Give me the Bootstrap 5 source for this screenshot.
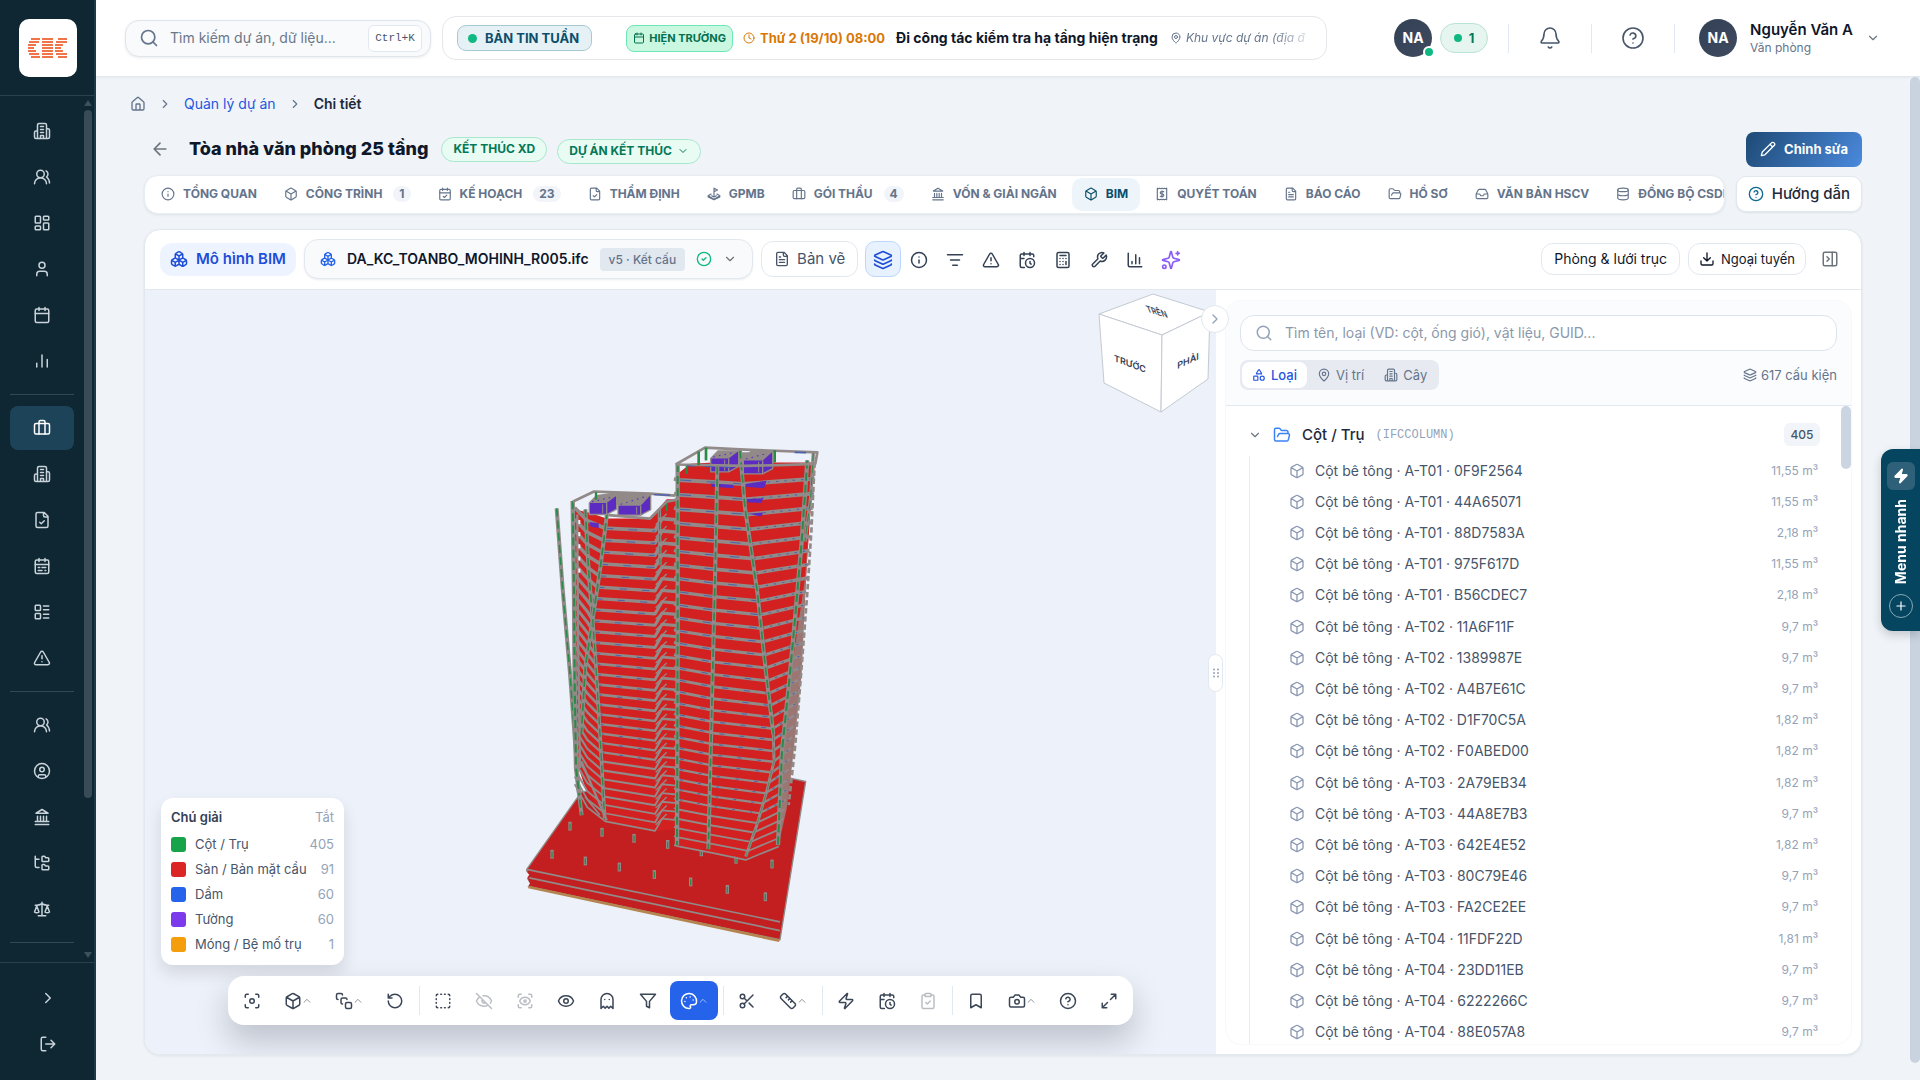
<!DOCTYPE html>
<html lang="vi">
<head>
<meta charset="utf-8">
<meta name="viewport" content="width=device-width, initial-scale=1">
<title>Tòa nhà văn phòng 25 tầng</title>
<link rel="stylesheet" href="https://cdn.jsdelivr.net/npm/bootstrap@5.3.0/dist/css/bootstrap.min.css">
<style>
:root{--ink:#0f172a;--slate:#475569;--muted:#64748b;--soft:#94a3b8;--line:#e2e8f0;--teal:#0b4f6c;--blue:#1d4ed8}
body{font-family:Inter,"Noto Sans",sans-serif;font-size:15px;line-height:20px;color:var(--ink);background:#f0f4f8}
a{text-decoration:none}
button{font:inherit;color:inherit;background:none;border:0;padding:0}
.ico{width:18px;height:18px;flex:none;fill:none;stroke:currentColor;stroke-width:2;stroke-linecap:round;stroke-linejoin:round}
.i10{width:10px;height:10px}.i12{width:12px;height:12px}.i14{width:14px;height:14px}.i16{width:16px;height:16px}.i20{width:20px;height:20px}.i24{width:24px;height:24px}
/* sidebar */
.side{width:96px;flex:none;background:#0f2733;border-right:2px solid #1d3a48;color:#c9d3da}
.side-logo{height:96px;border-bottom:1px solid #2b424e;padding:19px}
.side-logo a{width:58px;height:58px;border-radius:10px;background:#fff}
.side-list{padding:13px 0 0 10px;width:74px}
.side-list a{height:44px;margin-bottom:2px;border-radius:8px;color:#c9d3da}
.side-list a.on{background:#1c4358;color:#fff}
.side-list hr{margin:9px 0 11px;border:0;border-top:1px solid #2f4855;opacity:1}
.side-track{width:8px;margin:0 2px 0 auto;color:#3b515c}
.side-track i{flex:0 0 688px;background:#374c57;border-radius:4px}
.side-foot{height:118px;border-top:1px solid #2b424e;padding:12px 0 0 2px}
.side-foot button{height:44px;margin-bottom:2px}
/* top bar */
.top{height:77px;background:#fff;border-bottom:1px solid #e2e8f0;box-shadow:0 1px 2px #0f172a0a;padding:0 40px 0 29px}
.find{width:306px;height:37px;background:#f8fafc;border:1px solid #dfe5ec;border-radius:14px;box-shadow:0 1px 3px #0f172a14;color:var(--muted);padding:0 8px 0 13px;gap:9px;font-size:14px}
.find input,.tree-find input{border:0;outline:0;background:none;min-width:0;flex:1;color:var(--slate)}
.find input::placeholder{color:#6b7789}
.keys{font:11px "Liberation Mono",monospace;height:27px;width:54px;background:#fff;border:1px solid #e2e8f0;border-radius:6px;color:var(--slate)}
.news{height:44px;border:1px solid #e5e7eb;border-radius:14px;margin-left:11px;padding:0 10px 0 14px;flex:1;min-width:0;overflow:hidden;white-space:nowrap}
.news-tag{height:26px;border:1px solid #a9c8d6;border-radius:9px;background:#e6f1f6;color:var(--teal);font-size:13px;font-weight:700;padding:0 12px 0 10px;gap:8px}
.dot{width:9px;height:9px;border-radius:50%;background:#10b981;flex:none}
.site-tag{height:27px;border:1px solid #6ee7b7;border-radius:8px;background:#c9f7e0;color:#04704f;font-size:11px;font-weight:700;padding:0 6px;gap:4px;margin-left:34px}
.when{color:#d97706;font-size:13px;font-weight:700;gap:5px;margin-left:10px}
.what{font-size:14px;font-weight:700;margin-left:11px}
.where{font-size:12px;font-style:italic;color:var(--muted);gap:4px;margin-left:12px;min-width:0;flex:1;overflow:hidden;-webkit-mask-image:linear-gradient(90deg,#000 70%,transparent);mask-image:linear-gradient(90deg,#000 70%,transparent)}
.people{margin-left:67px}
.face{width:38px;height:38px;border-radius:50%;background:linear-gradient(135deg,#334155,#3f4a5f);color:#fff;font-size:14px;font-weight:700}
.face .dot{right:-3px;bottom:-1px;border:2px solid #fff;box-sizing:content-box;width:8px;height:8px}
.online{width:48px;height:30px;border:1px solid #b9e3d2;border-radius:15px;background:#e6f5ef;color:#047857;font-size:13px;font-weight:700;gap:7px}
.online .dot{width:8px;height:8px}
.vbar{width:1px;height:29px;background:#e2e8f0}
.cell{width:82px;color:var(--slate)}
.cell .ico{stroke-width:1.6}
.who{gap:13px}
.who b{font-size:15px;font-weight:600}
.who small{font-size:12px;color:#64748b}
/* main column */
.main{padding:16px 34px 25px;min-width:0}
.column{min-width:0;min-height:0}
.gutter{width:10px;flex:none}
.gutter i{display:block;background:#c9d3e0;border-radius:5px;height:calc(100% - 17px)}
.crumb{height:22px;gap:12px;color:var(--muted);margin-bottom:17px;font-size:14px}
.crumb a{color:#2456e0}.crumb a.home{color:var(--muted)}
.crumb span{color:#1e293b;font-weight:600}
.inner{padding:0 14px}
.head-row{height:35px;margin-bottom:8px;padding-left:6px;gap:10px}
.head-row h1{font-size:18px;line-height:28px;font-weight:800;margin:0 3px 0 9px}
.state{height:25px;border:1px solid #a7e8cd;border-radius:13px;background:#e9fcf3;color:#047857;font-size:12px;font-weight:700;padding:0 11px;gap:5px}
.edit{height:35px;border-radius:8px;color:#fff;background:linear-gradient(120deg,#1e4a75,#4a89dc);font-size:13px;font-weight:700;padding:0 14px;gap:8px}
.tabs{height:39px;background:#fff;border:1px solid #e8edf2;border-radius:14px;box-shadow:0 1px 3px #0f172a14;padding:0 4px;overflow:hidden;gap:3px;flex:1;min-width:0}
.tabs a{height:33px;border-radius:10px;padding:0 12px;gap:8px;color:#64748b;font-size:12px;font-weight:700;white-space:nowrap}
.tabs a.on{background:#edf5fa;color:#0b4f6c}
.num{background:#f1f5f9;border-radius:8px;font-size:12px;line-height:16px;padding:0 6px;margin-left:3px}
.guide{height:36px;background:#fff;border:1px solid #e2e8f0;border-radius:10px;box-shadow:0 1px 2px #0f172a14;padding:0 11px;gap:8px;margin-left:11px;font-size:15px;font-weight:500;color:#1e293b}
/* workspace */
.work{background:#fff;border:1px solid #e2e8f0;border-radius:16px;box-shadow:0 1px 3px #0f172a14;margin-top:15px;overflow:hidden}
.tools{height:60px;border-bottom:1px solid #e2e8f0;padding:0 22px 0 15px}
.mode{height:33px;border-radius:12px;background:#eef4ff;color:var(--blue);font-weight:600;padding:0 10px;gap:8px}
.file{height:40px;border:1px solid #e2e8f0;border-radius:14px;background:#f8fafc;box-shadow:0 1px 2px #0f172a14;padding:0 15px;margin:0 8px;font-size:14px;font-weight:600;gap:11px}
.ver{background:#e2e8f0;border-radius:4px;color:var(--muted);font-size:12px;font-weight:500;line-height:23px;padding:0 9px}
.pill{border:1px solid #e2e8f0;border-radius:12px;background:#fff;gap:7px}
.draw{height:36px;padding:0 12px;color:var(--slate)}
.cut{height:32px;padding:0 12px;font-size:14px}
.off{height:32px;padding:0 10px;font-size:13px;gap:6px;margin:0 15px 0 8px}
.sq{width:36px;height:36px;border-radius:10px;color:#334155}
.sq.on{background:#e8f1fe;border:1px solid #bcd7fb;color:var(--blue);margin-left:7px}
.view{background:#edf1f9;min-width:0;flex:1}
.model{left:355px;top:140px;width:350px;height:530px}
.cube{right:0;top:1px;width:126px;height:126px}
.legend-box{left:16px;bottom:89px;width:183px;background:#fff;border-radius:12px;box-shadow:0 8px 16px #0f172a1f;padding:9px 10px;font-size:13px;color:var(--slate)}
.legend-box dl{margin:5px 0 0}
.legend-box dl>div{height:24px;margin-top:1px}
.legend-box dt{font-weight:400}.legend-box dd{margin:0 0 0 auto;color:var(--soft)}
.legend-box i{width:15px;height:15px;border-radius:3px;margin-right:9px}
.dock{left:83px;bottom:29px;height:49px;background:#fff;border-radius:16px;box-shadow:0 16px 32px #0f172a38;padding:0 5px;gap:3px;color:#3b4657}
.dock button{width:38px;height:39px;border-radius:8px}
.dock button.wide{width:48px}
.dock button.on{background:#2563eb;color:#fff}
.dock button:disabled{opacity:.35}
.dock .vbar{margin:0 1px 0 2px}
.dock .ico+.ico{opacity:.7}
/* element tree */
.panel{width:645px;padding:10px 9px 9px}
.fold{left:-15px;top:15px;width:28px;height:28px;border-radius:50%;background:#fff;border:1px solid #e2e8f0;color:var(--soft)}
.grip{left:-8px;top:364px;width:15px;height:38px;border-radius:8px;background:#fff;border:1px solid #e2e8f0;color:var(--soft)}
.tree-box{border-radius:16px;border:1px solid #f6f8fa;overflow:hidden}
.tree-top{height:105px;background:#fbfcfe;border-bottom:1px solid #e2e8f0;padding:14px}
.tree-find{height:36px;background:#fff;border:1px solid #dde4ec;border-radius:14px;padding:0 14px;gap:10px;color:var(--soft);font-size:14px;margin-bottom:9px}
.tree-find input::placeholder{color:#8b98ab}
.seg{height:30px;background:#e7ebf1;border-radius:8px;padding:2px;font-size:13px;color:var(--muted)}
.seg button{height:26px;padding:0 10px;gap:5px;border-radius:8px}
.seg button.on{background:#fff;color:#2456e0;font-weight:500}
.count{font-size:13px;color:var(--muted);gap:4px}
.tree{padding:12px 21px 0 22px}
.tree-head{height:34px;gap:11px;color:#1e293b;font-weight:500}
.ifc{font:12px "Liberation Mono",monospace;color:var(--soft)}
.sum{margin-left:auto;width:36px;height:23px;background:#f1f5f9;border-radius:6px;font-size:12px;color:var(--slate)}
.tree ul{border-left:1px solid #e9edf3;margin:4px 0 0 1px;padding:0 2px 0 39px}
.tree li{height:31px;gap:10px;color:#475569;font-size:14px}
.tree li:nth-child(5n){margin-bottom:1px}
.tree li .ico{color:#8b99b3}
.tree li span{margin-left:auto;font-size:12px;color:var(--soft)}
.tree-bar{width:10px}.tree-bar i{display:block;height:63px;border-radius:5px;background:#cbd5e1}
/* quick menu tab */
.quick{right:0;top:449px;width:39px;height:182px;border-radius:12px 0 0 12px;background:#05455f;color:#fff;box-shadow:0 4px 10px #0f172a33;padding:13px 0}
.quick .zap{width:28px;height:28px;border-radius:6px;background:#2e6079}
.quick b{writing-mode:vertical-rl;transform:rotate(180deg);font-size:14px;line-height:18px;white-space:nowrap}
.quick .plus{width:24px;height:24px;border:1px solid #86a8b7;border-radius:50%}
</style>
<script src="https://cdn.jsdelivr.net/npm/bootstrap@5.3.0/dist/js/bootstrap.bundle.min.js"></script>
</head>
<body class="vh-100 overflow-hidden">
<svg class="d-none" xmlns="http://www.w3.org/2000/svg">
<symbol id="building" viewBox="0 0 24 24"><path d="M6 22V4a2 2 0 0 1 2-2h8a2 2 0 0 1 2 2v18ZM6 12H4a2 2 0 0 0-2 2v6a2 2 0 0 0 2 2h2M18 9h2a2 2 0 0 1 2 2v9a2 2 0 0 1-2 2h-2M10 6h4M10 10h4M10 14h4M10 22v-4h4v4"/></symbol>
<symbol id="users" viewBox="0 0 24 24"><path d="M18 21a8 8 0 0 0-16 0"/><circle cx="10" cy="8" r="5"/><path d="M22 20c0-3.400-2-6.500-4-8a5 5 0 0 0-.5-8.300"/></symbol>
<symbol id="dash" viewBox="0 0 24 24"><rect width="7" height="9" x="3" y="3" rx="1"/><rect width="7" height="5" x="14" y="3" rx="1"/><rect width="7" height="9" x="14" y="12" rx="1"/><rect width="7" height="5" x="3" y="16" rx="1"/></symbol>
<symbol id="user" viewBox="0 0 24 24"><path d="M19 21v-2a4 4 0 0 0-4-4H9a4 4 0 0 0-4 4v2"/><circle cx="12" cy="7" r="4"/></symbol>
<symbol id="cal" viewBox="0 0 24 24"><path d="M8 2v4M16 2v4M3 10h18"/><rect width="18" height="18" x="3" y="4" rx="2"/></symbol>
<symbol id="bars" viewBox="0 0 24 24"><path d="M19 20V10M12 20V4M5 20v-5"/></symbol>
<symbol id="case" viewBox="0 0 24 24"><path d="M16 20V4a2 2 0 0 0-2-2h-4a2 2 0 0 0-2 2v16"/><rect width="20" height="14" x="2" y="6" rx="2"/></symbol>
<symbol id="filecheck" viewBox="0 0 24 24"><path d="M15 2H6a2 2 0 0 0-2 2v16a2 2 0 0 0 2 2h12a2 2 0 0 0 2-2V7ZM14 2v4a2 2 0 0 0 2 2h4M9 15l2 2 4-4"/></symbol>
<symbol id="caldays" viewBox="0 0 24 24"><path d="M8 2v4M16 2v4M3 10h18M7 14h2M12 14h5M7 18h5M16 18h1"/><rect width="18" height="18" x="3" y="4" rx="2"/></symbol>
<symbol id="calcheck" viewBox="0 0 24 24"><path d="M8 2v4M16 2v4M3 10h18M9 16l2 2 4-4"/><rect width="18" height="18" x="3" y="4" rx="2"/></symbol>
<symbol id="list" viewBox="0 0 24 24"><rect width="7" height="7" x="3" y="3" rx="1"/><rect width="7" height="7" x="3" y="14" rx="1"/><path d="M14 4h7M14 9h7M14 15h7M14 20h7"/></symbol>
<symbol id="warn" viewBox="0 0 24 24"><path d="m21.700 18-8-14a2 2 0 0 0-3.500 0l-8 14A2 2 0 0 0 4 21h16a2 2 0 0 0 1.700-3M12 9v4M12 17h.01"/></symbol>
<symbol id="cuser" viewBox="0 0 24 24"><circle cx="12" cy="12" r="10"/><circle cx="12" cy="10" r="3"/><path d="M7 20.600V19a2 2 0 0 1 2-2h6a2 2 0 0 1 2 2v1.600"/></symbol>
<symbol id="bank" viewBox="0 0 24 24"><path d="M3 22h18M6 18v-7M10 18v-7M14 18v-7M18 18v-7M12 2l8 5H4ZM3 18h18"/></symbol>
<symbol id="ftree" viewBox="0 0 24 24"><path d="M20 10a1 1 0 0 0 1-1V6a1 1 0 0 0-1-1h-2.500a1 1 0 0 1-.8-.4l-.9-1.200A1 1 0 0 0 15 3h-2a1 1 0 0 0-1 1v5a1 1 0 0 0 1 1ZM20 21a1 1 0 0 0 1-1v-3a1 1 0 0 0-1-1h-2.900a1 1 0 0 1-.9-.5l-.4-.9a1 1 0 0 0-.9-.6H13a1 1 0 0 0-1 1v5a1 1 0 0 0 1 1ZM3 5a2 2 0 0 0 2 2h3M3 3v13a2 2 0 0 0 2 2h3"/></symbol>
<symbol id="scale" viewBox="0 0 24 24"><path d="m16 16 3-8 3 8c-.9.7-1.900 1-3 1s-2.100-.3-3-1M2 16l3-8 3 8c-.9.7-1.900 1-3 1s-2.100-.3-3-1M7 21h10M12 3v18M3 7h2c2 0 5-1 7-2 2 1 5 2 7 2h2"/></symbol>
<symbol id="right" viewBox="0 0 24 24"><path d="m9 18 6-6-6-6"/></symbol>
<symbol id="down" viewBox="0 0 24 24"><path d="m6 9 6 6 6-6"/></symbol>
<symbol id="up" viewBox="0 0 24 24"><path d="m5 15 7-7 7 7"/></symbol>
<symbol id="out" viewBox="0 0 24 24"><path d="M9 21H5a2 2 0 0 1-2-2V5a2 2 0 0 1 2-2h4M16 17l5-5-5-5M21 12H9"/></symbol>
<symbol id="search" viewBox="0 0 24 24"><circle cx="11" cy="11" r="8"/><path d="m21 21-4.300-4.300"/></symbol>
<symbol id="clock" viewBox="0 0 24 24"><circle cx="12" cy="12" r="10"/><path d="M12 6v6l4 2"/></symbol>
<symbol id="pin" viewBox="0 0 24 24"><path d="M20 10c0 5-5.500 10.200-7.400 11.800a1 1 0 0 1-1.200 0C9.500 20.200 4 15 4 10a8 8 0 0 1 16 0"/><circle cx="12" cy="10" r="3"/></symbol>
<symbol id="bell" viewBox="0 0 24 24"><path d="M10.300 21a2 2 0 0 0 3.400 0M3.300 15.300A1 1 0 0 0 4 17h16a1 1 0 0 0 .7-1.700C19.400 14 18 12.500 18 8A6 6 0 0 0 6 8c0 4.500-1.400 6-2.700 7.300"/></symbol>
<symbol id="help" viewBox="0 0 24 24"><circle cx="12" cy="12" r="10"/><path d="M9.100 9a3 3 0 0 1 5.800 1c0 2-3 3-3 3M12 17h.01"/></symbol>
<symbol id="home" viewBox="0 0 24 24"><path d="M15 21v-8a1 1 0 0 0-1-1h-4a1 1 0 0 0-1 1v8M3 10a2 2 0 0 1 .7-1.500l7-6a2 2 0 0 1 2.600 0l7 6A2 2 0 0 1 21 10v9a2 2 0 0 1-2 2H5a2 2 0 0 1-2-2Z"/></symbol>
<symbol id="back" viewBox="0 0 24 24"><path d="m12 19-7-7 7-7M19 12H5"/></symbol>
<symbol id="pencil" viewBox="0 0 24 24"><path d="M21.200 6.800a1 1 0 0 0-4-4L3.800 16.200a2 2 0 0 0-.5.8L2 21.400a.5.5 0 0 0 .6.6L7 20.700a2 2 0 0 0 .8-.5ZM15 5l4 4"/></symbol>
<symbol id="info" viewBox="0 0 24 24"><circle cx="12" cy="12" r="10"/><path d="M12 16v-4M12 8h.01"/></symbol>
<symbol id="box" viewBox="0 0 24 24"><path d="M21 8a2 2 0 0 0-1-1.700l-7-4a2 2 0 0 0-2 0l-7 4A2 2 0 0 0 3 8v8a2 2 0 0 0 1 1.700l7 4a2 2 0 0 0 2 0l7-4A2 2 0 0 0 21 16ZM3.300 7l8.700 5 8.700-5M12 22V12"/></symbol>
<symbol id="flag" viewBox="0 0 24 24"><path d="M12 15V2l6 3-6 3M7 12l-5 3 10 6 10-6-5-3M8 15l4 2 4-2M2 15v2l10 5 10-5v-2"/></symbol>
<symbol id="receipt" viewBox="0 0 24 24"><path d="M4 2v20l2-1 2 1 2-1 2 1 2-1 2 1 2-1 2 1V2l-2 1-2-1-2 1-2-1-2 1-2-1-2 1ZM15 8h-4a2 2 0 0 0 0 4h2a2 2 0 0 1 0 4H9M12 17.500v-11"/></symbol>
<symbol id="file" viewBox="0 0 24 24"><path d="M15 2H6a2 2 0 0 0-2 2v16a2 2 0 0 0 2 2h12a2 2 0 0 0 2-2V7ZM14 2v4a2 2 0 0 0 2 2h4M10 9H8M16 13H8M16 17H8"/></symbol>
<symbol id="folder" viewBox="0 0 24 24"><path d="m6 14 1.500-2.900A2 2 0 0 1 9.200 10H20a2 2 0 0 1 1.900 2.500l-1.500 6a2 2 0 0 1-2 1.500H4a2 2 0 0 1-2-2V5a2 2 0 0 1 2-2h3.900a2 2 0 0 1 1.700.9l.8 1.200a2 2 0 0 0 1.700.9H18a2 2 0 0 1 2 2v2"/></symbol>
<symbol id="inbox" viewBox="0 0 24 24"><path d="M22 12h-6l-2 3h-4l-2-3H2M5.500 5.100 2 12v6a2 2 0 0 0 2 2h16a2 2 0 0 0 2-2v-6l-3.500-6.900A2 2 0 0 0 16.800 4H7.200a2 2 0 0 0-1.700 1.100"/></symbol>
<symbol id="db" viewBox="0 0 24 24"><ellipse cx="12" cy="5" rx="9" ry="3"/><path d="M3 5v14c0 1.700 4 3 9 3s9-1.300 9-3V5M3 12c0 1.700 4 3 9 3s9-1.300 9-3"/></symbol>
<symbol id="boxes" viewBox="0 0 24 24"><path d="M3 13a2 2 0 0 0-1 1.600v3.200a2 2 0 0 0 1 1.700l3 1.800a2 2 0 0 0 2 0l4-2.300v-5.500l-4-2.400a2 2 0 0 0-2 0ZM7 16.500l-4.700-2.800M7 16.500l5-3M7 16.500v5.200M12 13.500V19l4 2.400a2 2 0 0 0 2 0l3-1.800a2 2 0 0 0 1-1.700v-3.200a2 2 0 0 0-1-1.700l-3-1.800a2 2 0 0 0-2 0ZM17 16.500l-5-3M17 16.500l4.700-2.800M17 16.500v5.200M8 4.400a2 2 0 0 0-1 1.700v4.400l5 3 5-3V6.100a2 2 0 0 0-1-1.700l-3-1.800a2 2 0 0 0-2 0ZM12 8 7.300 5.200M12 8l4.700-2.800M12 13.500V8"/></symbol>
<symbol id="ok" viewBox="0 0 24 24"><circle cx="12" cy="12" r="10"/><path d="m9 12 2 2 4-4"/></symbol>
<symbol id="layers" viewBox="0 0 24 24"><path d="M12.800 2.200a2 2 0 0 0-1.600 0L2.600 6.100a1 1 0 0 0 0 1.800l8.600 3.900a2 2 0 0 0 1.600 0l8.600-3.900a1 1 0 0 0 0-1.800ZM2 12a1 1 0 0 0 .6.900l8.600 3.900a2 2 0 0 0 1.600 0l8.600-3.900A1 1 0 0 0 22 12M2 17a1 1 0 0 0 .6.900l8.600 3.900a2 2 0 0 0 1.600 0l8.600-3.900A1 1 0 0 0 22 17"/></symbol>
<symbol id="lines" viewBox="0 0 24 24"><path d="M2 5h20M6 12h12M9 19h6"/></symbol>
<symbol id="calclock" viewBox="0 0 24 24"><path d="M21 7.500V6a2 2 0 0 0-2-2H5a2 2 0 0 0-2 2v14a2 2 0 0 0 2 2h3.500M16 2v4M8 2v4M3 10h5M17.500 17.500 16 16.300V14"/><circle cx="16" cy="16" r="6"/></symbol>
<symbol id="calc" viewBox="0 0 24 24"><rect width="16" height="20" x="4" y="2" rx="2"/><path d="M8 6h8M16 14v4M16 10h.01M12 10h.01M8 10h.01M12 14h.01M8 14h.01M12 18h.01M8 18h.01"/></symbol>
<symbol id="wrench" viewBox="0 0 24 24"><path d="M14.700 6.300a1 1 0 0 0 0 1.400l1.600 1.600a1 1 0 0 0 1.400 0l3.800-3.800a6 6 0 0 1-7.900 7.900l-6.900 6.900a2.100 2.100 0 0 1-3-3l6.900-6.900a6 6 0 0 1 7.900-7.900Z"/></symbol>
<symbol id="chart" viewBox="0 0 24 24"><path d="M3 3v16a2 2 0 0 0 2 2h16M18 17V9M13 17V5M8 17v-3"/></symbol>
<symbol id="spark" viewBox="0 0 24 24"><path d="M9.900 15.500A2 2 0 0 0 8.500 14.100l-6.100-1.600a.5.5 0 0 1 0-1L8.500 9.900A2 2 0 0 0 9.900 8.500l1.600-6.100a.5.5 0 0 1 1 0l1.600 6.100a2 2 0 0 0 1.400 1.400l6.100 1.600a.5.5 0 0 1 0 1l-6.100 1.600a2 2 0 0 0-1.400 1.400l-1.600 6.100a.5.5 0 0 1-1 0ZM20 2v4M22 4h-4"/><circle cx="4" cy="20" r="2"/></symbol>
<symbol id="load" viewBox="0 0 24 24"><path d="M21 15v4a2 2 0 0 1-2 2H5a2 2 0 0 1-2-2v-4M7 10l5 5 5-5M12 15V3"/></symbol>
<symbol id="side" viewBox="0 0 24 24"><rect width="18" height="18" x="3" y="3" rx="2"/><path d="M15 3v18M8 9l3 3-3 3"/></symbol>
<symbol id="shapes" viewBox="0 0 24 24"><path d="M8.300 10a.7.7 0 0 1-.6-1.100l3.700-6a.7.7 0 0 1 1.200 0l3.700 6a.7.7 0 0 1-.6 1.100Z"/><rect x="3" y="14" width="7" height="7" rx="1"/><circle cx="17.500" cy="17.500" r="3.500"/></symbol>
<symbol id="focus" viewBox="0 0 24 24"><circle cx="12" cy="12" r="3"/><path d="M3 7V5a2 2 0 0 1 2-2h2M17 3h2a2 2 0 0 1 2 2v2M21 17v2a2 2 0 0 1-2 2h-2M7 21H5a2 2 0 0 1-2-2v-2"/></symbol>
<symbol id="stack" viewBox="0 0 24 24"><path d="M4 10c-1.100 0-2-.9-2-2V4c0-1.100.9-2 2-2h4c1.100 0 2 .9 2 2M10 16c-1.100 0-2-.9-2-2v-4c0-1.100.9-2 2-2h4c1.100 0 2 .9 2 2"/><rect width="8" height="8" x="14" y="14" rx="2"/></symbol>
<symbol id="undo" viewBox="0 0 24 24"><path d="M3 12a9 9 0 1 0 9-9 9.800 9.800 0 0 0-6.700 2.700L3 8M3 3v5h5"/></symbol>
<symbol id="dashed" viewBox="0 0 24 24"><path d="M5 3a2 2 0 0 0-2 2M19 3a2 2 0 0 1 2 2M21 19a2 2 0 0 1-2 2M5 21a2 2 0 0 1-2-2M9 3h1M9 21h1M14 3h1M14 21h1M3 9v1M21 9v1M3 14v1M21 14v1"/></symbol>
<symbol id="eye" viewBox="0 0 24 24"><path d="M2.100 12.300a1 1 0 0 1 0-.6 10.700 10.700 0 0 1 19.800 0 1 1 0 0 1 0 .6 10.700 10.700 0 0 1-19.800 0"/><circle cx="12" cy="12" r="3"/></symbol>
<symbol id="eyeoff" viewBox="0 0 24 24"><path d="M10.700 5.100a10.700 10.700 0 0 1 11.200 6.600 1 1 0 0 1 0 .6 10.700 10.700 0 0 1-1.400 2.500M14.100 14.200a3 3 0 0 1-4.200-4.200M17.500 17.500a10.700 10.700 0 0 1-15.400-5.200 1 1 0 0 1 0-.6 10.700 10.700 0 0 1 4.400-5.200M2 2l20 20"/></symbol>
<symbol id="scaneye" viewBox="0 0 24 24"><path d="M3 7V5a2 2 0 0 1 2-2h2M17 3h2a2 2 0 0 1 2 2v2M21 17v2a2 2 0 0 1-2 2h-2M7 21H5a2 2 0 0 1-2-2v-2M5.100 12.300a1 1 0 0 1 0-.6 7.500 7.500 0 0 1 13.800 0 1 1 0 0 1 0 .6 7.500 7.500 0 0 1-13.800 0"/><circle cx="12" cy="12" r="1.500"/></symbol>
<symbol id="ghost" viewBox="0 0 24 24"><path d="M9 10h.01M15 10h.01M12 2a8 8 0 0 0-8 8v12l3-3 2.500 2.500L12 19l2.500 2.500L17 19l3 3V10a8 8 0 0 0-8-8"/></symbol>
<symbol id="funnel" viewBox="0 0 24 24"><path d="M22 3H2l8 9.500V19l4 2v-8.500Z"/></symbol>
<symbol id="palette" viewBox="0 0 24 24"><path d="M12 22a10 10 0 1 1 10-9c0 2.500-2 4-4.500 4h-2.300a1.700 1.700 0 0 0-1.300 2.800l.3.400A1.700 1.700 0 0 1 12 22M13.500 6.500h.01M17.500 10.500h.01M6.500 12.500h.01M8.500 7.500h.01"/></symbol>
<symbol id="cut" viewBox="0 0 24 24"><circle cx="6" cy="6" r="3"/><circle cx="6" cy="18" r="3"/><path d="M8.100 8.100 12 12M20 4 8.100 15.900M14.800 14.800 20 20"/></symbol>
<symbol id="ruler" viewBox="0 0 24 24"><path d="M2.700 8.700a2.400 2.400 0 0 1 0-3.400l2.600-2.600a2.400 2.400 0 0 1 3.400 0l12.600 12.600a2.400 2.400 0 0 1 0 3.400l-2.600 2.600a2.400 2.400 0 0 1-3.400 0ZM14.500 8.500l-2 2M11.500 5.500l-2 2M17.500 11.500l-2 2"/></symbol>
<symbol id="zap" viewBox="0 0 24 24"><path d="M4 14a1 1 0 0 1-.8-1.600l9.900-10.200a.5.5 0 0 1 .9.500L12.100 8.700A1 1 0 0 0 13 10h7a1 1 0 0 1 .8 1.600l-9.900 10.200a.5.5 0 0 1-.9-.5l1.900-6A1 1 0 0 0 11 14Z"/></symbol>
<symbol id="clip" viewBox="0 0 24 24"><rect width="8" height="4" x="8" y="2" rx="1"/><path d="M16 4h2a2 2 0 0 1 2 2v14a2 2 0 0 1-2 2H6a2 2 0 0 1-2-2V6a2 2 0 0 1 2-2h2M9 14l2 2 4-4"/></symbol>
<symbol id="mark" viewBox="0 0 24 24"><path d="m19 21-7-4-7 4V5a2 2 0 0 1 2-2h10a2 2 0 0 1 2 2Z"/></symbol>
<symbol id="cam" viewBox="0 0 24 24"><path d="M14.500 4h-5L7 7H4a2 2 0 0 0-2 2v9a2 2 0 0 0 2 2h16a2 2 0 0 0 2-2V9a2 2 0 0 0-2-2h-3Z"/><circle cx="12" cy="13" r="3"/></symbol>
<symbol id="max" viewBox="0 0 24 24"><path d="M15 3h6v6M21 3l-7 7M3 21l7-7M9 21H3v-6"/></symbol>
<symbol id="plus" viewBox="0 0 24 24"><path d="M5 12h14M12 5v14"/></symbol>
<symbol id="dots" viewBox="0 0 24 24"><path d="M8 5h.01M8 12h.01M8 19h.01M16 5h.01M16 12h.01M16 19h.01" stroke-width="4"/></symbol>
</svg>

<div class="d-flex h-100">
<aside class="side d-flex flex-column">
  <div class="side-logo"><a href="#" class="d-flex align-items-center justify-content-center" aria-label="Trang chủ">
    <svg width="40" height="20" viewBox="0 0 40 20" stroke="#f0744a" stroke-width="2"><path d="M3 1h9M1 4h10M0 7h8M0 10h6M0 13h8M1 16h10M3 19h9M14 1h11M14 4h11M14 7h11M14 10h11M14 13h11M14 16h11M14 19h11M30 1h9M28 4h11M27 7h8M27 10h6M27 13h8M28 16h11M30 19h9"/></svg></a></div>
  <div class="d-flex flex-fill overflow-hidden">
    <nav class="side-list d-flex flex-column">
      <a href="#" class="d-flex align-items-center justify-content-center"><svg class="ico"><use href="#building"/></svg></a>
      <a href="#" class="d-flex align-items-center justify-content-center"><svg class="ico"><use href="#users"/></svg></a>
      <a href="#" class="d-flex align-items-center justify-content-center"><svg class="ico"><use href="#dash"/></svg></a>
      <a href="#" class="d-flex align-items-center justify-content-center"><svg class="ico"><use href="#user"/></svg></a>
      <a href="#" class="d-flex align-items-center justify-content-center"><svg class="ico"><use href="#cal"/></svg></a>
      <a href="#" class="d-flex align-items-center justify-content-center"><svg class="ico"><use href="#bars"/></svg></a>
      <hr>
      <a href="#" class="on d-flex align-items-center justify-content-center"><svg class="ico"><use href="#case"/></svg></a>
      <a href="#" class="d-flex align-items-center justify-content-center"><svg class="ico"><use href="#building"/></svg></a>
      <a href="#" class="d-flex align-items-center justify-content-center"><svg class="ico"><use href="#filecheck"/></svg></a>
      <a href="#" class="d-flex align-items-center justify-content-center"><svg class="ico"><use href="#caldays"/></svg></a>
      <a href="#" class="d-flex align-items-center justify-content-center"><svg class="ico"><use href="#list"/></svg></a>
      <a href="#" class="d-flex align-items-center justify-content-center"><svg class="ico"><use href="#warn"/></svg></a>
      <hr>
      <a href="#" class="d-flex align-items-center justify-content-center"><svg class="ico"><use href="#users"/></svg></a>
      <a href="#" class="d-flex align-items-center justify-content-center"><svg class="ico"><use href="#cuser"/></svg></a>
      <a href="#" class="d-flex align-items-center justify-content-center"><svg class="ico"><use href="#bank"/></svg></a>
      <a href="#" class="d-flex align-items-center justify-content-center"><svg class="ico"><use href="#ftree"/></svg></a>
      <a href="#" class="d-flex align-items-center justify-content-center"><svg class="ico"><use href="#scale"/></svg></a>
      <hr>
    </nav>
    <div class="side-track d-flex flex-column py-1">
      <svg width="8" height="6" class="mb-1"><path d="M0 6 4 0l4 6Z" fill="currentColor"/></svg><i></i>
      <svg width="8" height="6" class="mt-auto"><path d="M0 0 4 6l4-6Z" fill="currentColor"/></svg>
    </div>
  </div>
  <div class="side-foot d-flex flex-column">
    <button aria-label="Mở rộng"><svg class="ico"><use href="#right"/></svg></button>
    <button aria-label="Đăng xuất"><svg class="ico"><use href="#out"/></svg></button>
  </div>
</aside>

<div class="column d-flex flex-column flex-fill">
<header class="top d-flex align-items-center flex-shrink-0">
  <label class="find d-flex align-items-center flex-shrink-0"><svg class="ico i20"><use href="#search"/></svg><input type="search" placeholder="Tìm kiếm dự án, dữ liệu..." aria-label="Tìm kiếm"><span class="keys d-flex align-items-center justify-content-center">Ctrl+K</span></label>
  <div class="news d-flex align-items-center">
    <span class="news-tag d-flex align-items-center"><i class="dot"></i>BẢN TIN TUẦN</span>
    <span class="site-tag d-flex align-items-center"><svg class="ico i12"><use href="#cal"/></svg>HIỆN TRƯỜNG</span>
    <span class="when d-flex align-items-center"><svg class="ico i12"><use href="#clock"/></svg>Thứ 2 (19/10) 08:00</span>
    <span class="what">Đi công tác kiểm tra hạ tầng hiện trạng</span>
    <span class="where d-flex align-items-center"><svg class="ico i12"><use href="#pin"/></svg>Khu vực dự án (địa đ</span>
  </div>
  <div class="people d-flex align-items-center flex-shrink-0">
    <span class="face position-relative d-flex align-items-center justify-content-center">NA<i class="dot position-absolute"></i></span>
    <span class="online d-flex align-items-center justify-content-center mx-2 me-3"><i class="dot"></i>1</span>
    <i class="vbar ms-1"></i>
    <button class="cell" aria-label="Thông báo"><svg class="ico i24"><use href="#bell"/></svg></button>
    <i class="vbar"></i>
    <button class="cell" aria-label="Trợ giúp"><svg class="ico i24"><use href="#help"/></svg></button>
    <i class="vbar me-4"></i>
    <button class="who d-flex align-items-center text-start"><span class="face d-flex align-items-center justify-content-center">NA</span><span class="d-flex flex-column lh-sm"><b>Nguyễn Văn A</b><small>Văn phòng</small></span><svg class="ico i14 text-secondary"><use href="#down"/></svg></button>
  </div>
</header>

<div class="column d-flex flex-fill">
<main class="main d-flex flex-column flex-fill">
  <nav class="crumb d-flex align-items-center" aria-label="breadcrumb">
    <a href="#" class="home d-flex" aria-label="Trang chủ"><svg class="ico i16"><use href="#home"/></svg></a>
    <svg class="ico i14"><use href="#right"/></svg><a href="#">Quản lý dự án</a>
    <svg class="ico i14"><use href="#right"/></svg><span>Chi tiết</span>
  </nav>
  <div class="inner column d-flex flex-column flex-fill">
    <div class="head-row d-flex align-items-center">
      <button aria-label="Quay lại" class="d-flex text-secondary"><svg class="ico i20"><use href="#back"/></svg></button>
      <h1>Tòa nhà văn phòng 25 tầng</h1>
      <span class="state d-flex align-items-center">KẾT THÚC XD</span>
      <button class="state d-flex align-items-center mt-1">DỰ ÁN KẾT THÚC <svg class="ico i12"><use href="#down"/></svg></button>
      <button class="edit d-flex align-items-center ms-auto"><svg class="ico i16"><use href="#pencil"/></svg>Chỉnh sửa</button>
    </div>
    <div class="d-flex align-items-center">
      <nav class="tabs d-flex align-items-center">
        <a href="#" class="d-flex align-items-center"><svg class="ico i14"><use href="#info"/></svg>TỔNG QUAN</a>
        <a href="#" class="d-flex align-items-center"><svg class="ico i14"><use href="#box"/></svg>CÔNG TRÌNH<span class="num">1</span></a>
        <a href="#" class="d-flex align-items-center"><svg class="ico i14"><use href="#calcheck"/></svg>KẾ HOẠCH<span class="num">23</span></a>
        <a href="#" class="d-flex align-items-center"><svg class="ico i14"><use href="#filecheck"/></svg>THẨM ĐỊNH</a>
        <a href="#" class="d-flex align-items-center"><svg class="ico i14"><use href="#flag"/></svg>GPMB</a>
        <a href="#" class="d-flex align-items-center"><svg class="ico i14"><use href="#case"/></svg>GÓI THẦU<span class="num">4</span></a>
        <a href="#" class="d-flex align-items-center"><svg class="ico i14"><use href="#bank"/></svg>VỐN &amp; GIẢI NGÂN</a>
        <a href="#" class="on d-flex align-items-center" aria-current="page"><svg class="ico i14"><use href="#box"/></svg>BIM</a>
        <a href="#" class="d-flex align-items-center"><svg class="ico i14"><use href="#receipt"/></svg>QUYẾT TOÁN</a>
        <a href="#" class="d-flex align-items-center"><svg class="ico i14"><use href="#file"/></svg>BÁO CÁO</a>
        <a href="#" class="d-flex align-items-center"><svg class="ico i14"><use href="#folder"/></svg>HỒ SƠ</a>
        <a href="#" class="d-flex align-items-center"><svg class="ico i14"><use href="#inbox"/></svg>VĂN BẢN HSCV</a>
        <a href="#" class="d-flex align-items-center"><svg class="ico i14"><use href="#db"/></svg>ĐỒNG BỘ CSDL</a>
      </nav>
      <button class="guide d-flex align-items-center"><svg class="ico i16" style="color:#0e6a8c"><use href="#help"/></svg>Hướng dẫn</button>
    </div>

    <section class="work d-flex flex-column flex-fill">
      <div class="tools d-flex align-items-center flex-shrink-0">
        <button class="mode d-flex align-items-center"><svg class="ico"><use href="#boxes"/></svg>Mô hình BIM</button>
        <button class="file d-flex align-items-center" aria-haspopup="listbox"><svg class="ico i16" style="color:#2563eb"><use href="#boxes"/></svg>DA_KC_TOANBO_MOHINH_R005.ifc<span class="ver">v5 · Kết cấu</span><svg class="ico i16" style="color:#10b981"><use href="#ok"/></svg><svg class="ico i14 text-secondary"><use href="#down"/></svg></button>
        <button class="pill draw d-flex align-items-center"><svg class="ico i16"><use href="#file"/></svg>Bản vẽ</button>
        <button class="sq on" aria-label="Lớp"><svg class="ico i20"><use href="#layers"/></svg></button>
        <button class="sq" aria-label="Thông tin"><svg class="ico"><use href="#info"/></svg></button>
        <button class="sq" aria-label="Lọc"><svg class="ico"><use href="#lines"/></svg></button>
        <button class="sq" aria-label="Cảnh báo"><svg class="ico"><use href="#warn"/></svg></button>
        <button class="sq" aria-label="Tiến độ"><svg class="ico"><use href="#calclock"/></svg></button>
        <button class="sq" aria-label="Khối lượng"><svg class="ico"><use href="#calc"/></svg></button>
        <button class="sq" aria-label="Công cụ"><svg class="ico"><use href="#wrench"/></svg></button>
        <button class="sq" aria-label="Biểu đồ"><svg class="ico"><use href="#chart"/></svg></button>
        <button class="sq" aria-label="Trợ lý AI" style="color:#8b5cf6"><svg class="ico i20"><use href="#spark"/></svg></button>
        <button class="pill cut ms-auto">Phòng &amp; lưới trục</button>
        <button class="pill off d-flex align-items-center"><svg class="ico i16"><use href="#load"/></svg>Ngoại tuyến</button>
        <button class="d-flex text-secondary" aria-label="Ẩn bảng"><svg class="ico"><use href="#side"/></svg></button>
      </div>
      <div class="column d-flex flex-fill">
        <div class="view position-relative">
          <svg class="model position-absolute" id="model" viewBox="0 0 1050 1568" preserveAspectRatio="none" stroke-linejoin="round"></svg>
          <svg class="cube position-absolute" viewBox="0 0 126 126" font-family="Inter,sans-serif" font-size="9" font-weight="600" fill="#334155" text-anchor="middle">
            <g fill="#fff" stroke="#c3cad3"><path d="M9 23 63 3l57 18-48 23Z"/><path d="m9 23 63 21-1 77-57-29Z"/><path d="m72 44 48-23-2 67-47 33Z"/></g>
            <text transform="translate(40 76) skewY(20)">TRƯỚC</text>
            <text transform="translate(98 73) skewY(-25)">PHẢI</text>
            <text font-size="8" transform="translate(68 24) rotate(16) skewX(38)">TRÊN</text>
          </svg>
          <div class="legend-box position-absolute">
            <div class="d-flex justify-content-between"><span class="fw-semibold" style="color:#334155">Chú giải</span><button style="color:#94a3b8">Tắt</button></div>
            <dl>
              <div class="d-flex align-items-center"><i style="background:#16a34a"></i><dt>Cột / Trụ</dt><dd>405</dd></div>
              <div class="d-flex align-items-center"><i style="background:#dc2626"></i><dt>Sàn / Bản mặt cầu</dt><dd>91</dd></div>
              <div class="d-flex align-items-center"><i style="background:#2563eb"></i><dt>Dầm</dt><dd>60</dd></div>
              <div class="d-flex align-items-center"><i style="background:#7c3aed"></i><dt>Tường</dt><dd>60</dd></div>
              <div class="d-flex align-items-center"><i style="background:#f59e0b"></i><dt>Móng / Bệ mố trụ</dt><dd>1</dd></div>
            </dl>
          </div>
          <div class="dock position-absolute d-flex align-items-center" role="toolbar">
            <button aria-label="Lấy nét"><svg class="ico"><use href="#focus"/></svg></button>
            <button class="wide" aria-label="Góc nhìn"><svg class="ico"><use href="#box"/></svg><svg class="ico i10"><use href="#up"/></svg></button>
            <button class="wide" aria-label="Tách lớp"><svg class="ico"><use href="#stack"/></svg><svg class="ico i10"><use href="#up"/></svg></button>
            <button aria-label="Đặt lại"><svg class="ico"><use href="#undo"/></svg></button>
            <i class="vbar"></i>
            <button aria-label="Chọn vùng"><svg class="ico"><use href="#dashed"/></svg></button>
            <button aria-label="Ẩn" disabled><svg class="ico"><use href="#eyeoff"/></svg></button>
            <button aria-label="Cô lập" disabled><svg class="ico"><use href="#scaneye"/></svg></button>
            <button aria-label="Hiện"><svg class="ico"><use href="#eye"/></svg></button>
            <button aria-label="Trong suốt"><svg class="ico"><use href="#ghost"/></svg></button>
            <button aria-label="Lọc"><svg class="ico"><use href="#funnel"/></svg></button>
            <button class="wide on" aria-label="Màu"><svg class="ico"><use href="#palette"/></svg><svg class="ico i10"><use href="#up"/></svg></button>
            <i class="vbar"></i>
            <button aria-label="Cắt"><svg class="ico"><use href="#cut"/></svg></button>
            <button class="wide" aria-label="Đo"><svg class="ico"><use href="#ruler"/></svg><svg class="ico i10"><use href="#up"/></svg></button>
            <i class="vbar"></i>
            <button aria-label="Va chạm"><svg class="ico"><use href="#zap"/></svg></button>
            <button aria-label="Tiến độ"><svg class="ico"><use href="#calclock"/></svg></button>
            <button aria-label="Kiểm tra" disabled><svg class="ico"><use href="#clip"/></svg></button>
            <i class="vbar"></i>
            <button aria-label="Đánh dấu"><svg class="ico"><use href="#mark"/></svg></button>
            <button class="wide" aria-label="Chụp"><svg class="ico"><use href="#cam"/></svg><svg class="ico i10"><use href="#up"/></svg></button>
            <button aria-label="Trợ giúp"><svg class="ico"><use href="#help"/></svg></button>
            <button aria-label="Toàn màn hình"><svg class="ico"><use href="#max"/></svg></button>
          </div>
        </div>
        <aside class="panel position-relative d-flex flex-column flex-shrink-0">
          <button class="fold position-absolute d-flex align-items-center justify-content-center" aria-label="Thu gọn"><svg class="ico i16"><use href="#right"/></svg></button>
          <span class="grip position-absolute d-flex align-items-center justify-content-center"><svg class="ico i12"><use href="#dots"/></svg></span>
          <div class="tree-box column d-flex flex-column flex-fill">
            <div class="tree-top flex-shrink-0">
              <label class="tree-find d-flex align-items-center"><svg class="ico"><use href="#search"/></svg><input type="search" placeholder="Tìm tên, loại (VD: cột, ống gió), vật liệu, GUID..." aria-label="Tìm cấu kiện"></label>
              <div class="d-flex align-items-center justify-content-between">
                <div class="seg d-flex"><button class="on d-flex align-items-center"><svg class="ico i14"><use href="#shapes"/></svg>Loại</button><button class="d-flex align-items-center"><svg class="ico i14"><use href="#pin"/></svg>Vị trí</button><button class="d-flex align-items-center"><svg class="ico i14"><use href="#building"/></svg>Cây</button></div>
                <span class="count d-flex align-items-center"><svg class="ico i14"><use href="#layers"/></svg>617 cấu kiện</span>
              </div>
            </div>
            <div class="d-flex flex-fill overflow-hidden">
              <div class="tree flex-fill">
                <div class="tree-head d-flex align-items-center"><svg class="ico i14 text-secondary"><use href="#down"/></svg><svg class="ico" style="color:#3b82f6"><use href="#folder"/></svg>Cột / Trụ<span class="ifc">(IFCCOLUMN)</span><span class="sum d-flex align-items-center justify-content-center">405</span></div>
                <ul class="list-unstyled">
                  <li class="d-flex align-items-center"><svg class="ico i16"><use href="#box"/></svg>Cột bê tông · A-T01 · 0F9F2564<span>11,55 m³</span></li>
                  <li class="d-flex align-items-center"><svg class="ico i16"><use href="#box"/></svg>Cột bê tông · A-T01 · 44A65071<span>11,55 m³</span></li>
                  <li class="d-flex align-items-center"><svg class="ico i16"><use href="#box"/></svg>Cột bê tông · A-T01 · 88D7583A<span>2,18 m³</span></li>
                  <li class="d-flex align-items-center"><svg class="ico i16"><use href="#box"/></svg>Cột bê tông · A-T01 · 975F617D<span>11,55 m³</span></li>
                  <li class="d-flex align-items-center"><svg class="ico i16"><use href="#box"/></svg>Cột bê tông · A-T01 · B56CDEC7<span>2,18 m³</span></li>
                  <li class="d-flex align-items-center"><svg class="ico i16"><use href="#box"/></svg>Cột bê tông · A-T02 · 11A6F11F<span>9,7 m³</span></li>
                  <li class="d-flex align-items-center"><svg class="ico i16"><use href="#box"/></svg>Cột bê tông · A-T02 · 1389987E<span>9,7 m³</span></li>
                  <li class="d-flex align-items-center"><svg class="ico i16"><use href="#box"/></svg>Cột bê tông · A-T02 · A4B7E61C<span>9,7 m³</span></li>
                  <li class="d-flex align-items-center"><svg class="ico i16"><use href="#box"/></svg>Cột bê tông · A-T02 · D1F70C5A<span>1,82 m³</span></li>
                  <li class="d-flex align-items-center"><svg class="ico i16"><use href="#box"/></svg>Cột bê tông · A-T02 · F0ABED00<span>1,82 m³</span></li>
                  <li class="d-flex align-items-center"><svg class="ico i16"><use href="#box"/></svg>Cột bê tông · A-T03 · 2A79EB34<span>1,82 m³</span></li>
                  <li class="d-flex align-items-center"><svg class="ico i16"><use href="#box"/></svg>Cột bê tông · A-T03 · 44A8E7B3<span>9,7 m³</span></li>
                  <li class="d-flex align-items-center"><svg class="ico i16"><use href="#box"/></svg>Cột bê tông · A-T03 · 642E4E52<span>1,82 m³</span></li>
                  <li class="d-flex align-items-center"><svg class="ico i16"><use href="#box"/></svg>Cột bê tông · A-T03 · 80C79E46<span>9,7 m³</span></li>
                  <li class="d-flex align-items-center"><svg class="ico i16"><use href="#box"/></svg>Cột bê tông · A-T03 · FA2CE2EE<span>9,7 m³</span></li>
                  <li class="d-flex align-items-center"><svg class="ico i16"><use href="#box"/></svg>Cột bê tông · A-T04 · 11FDF22D<span>1,81 m³</span></li>
                  <li class="d-flex align-items-center"><svg class="ico i16"><use href="#box"/></svg>Cột bê tông · A-T04 · 23DD11EB<span>9,7 m³</span></li>
                  <li class="d-flex align-items-center"><svg class="ico i16"><use href="#box"/></svg>Cột bê tông · A-T04 · 6222266C<span>9,7 m³</span></li>
                  <li class="d-flex align-items-center"><svg class="ico i16"><use href="#box"/></svg>Cột bê tông · A-T04 · 88E057A8<span>9,7 m³</span></li>
                </ul>
              </div>
              <div class="tree-bar"><i></i></div>
            </div>
          </div>
        </aside>
      </div>
    </section>
  </div>
</main>
<div class="gutter"><i></i></div>
</div>
</div>
</div>

<button class="quick position-absolute d-flex flex-column align-items-center justify-content-between">
  <span class="zap d-flex align-items-center justify-content-center"><svg class="ico i16" style="fill:currentColor"><use href="#zap"/></svg></span>
  <b>Menu nhanh</b>
  <span class="plus d-flex align-items-center justify-content-center"><svg class="ico i14"><use href="#plus"/></svg></span>
</button>

<script>
// Draws the structural model: podium slabs, two towers with floor edges, columns and roof cores.
(function () {
  var out = [];
  var GRAY = '#918a88', GREEN = '#2b8a48', BLUE = '#4a62b0', RED = '#d32121', DEEP = '#c41f20', VIOLET = '#5c2cc2';
  function at(table, y) {
    for (var i = 1; i < table.length; i++) {
      if (y <= table[i][0]) {
        var a = table[i - 1], b = table[i];
        return a[1] + (b[1] - a[1]) * (y - a[0]) / (b[0] - a[0]);
      }
    }
    return table[table.length - 1][1];
  }
  function poly(points, fill, stroke, w) {
    out.push('<polygon points="' + points + '" fill="' + fill + '"' + (stroke ? ' stroke="' + stroke + '" stroke-width="' + (w || 4) + '"' : '') + '/>');
  }
  function line(points, stroke, w, dash) {
    out.push('<polyline points="' + points + '" fill="none" stroke="' + stroke + '" stroke-width="' + w + '"' + (dash ? ' stroke-dasharray="' + dash + '"' : '') + '/>');
  }
  function column(points, w) {
    line(points, GRAY, w || 13);
    line(points, GREEN, (w || 13) - 7, '24 12');
  }
  // podium
  poly('80,1300 245,1070 870,1030 917,1040 840,1508 85,1350', DEEP, GRAY, 4);
  poly('78,1306 88,1316 80,1326 90,1342 84,1350 70,1350 70,1306', '#edf1f9');
  line('80,1300 840,1455', GRAY, 5);
  line('88,1325 840,1481', GRAY, 5);
  line('85,1352 838,1511', '#b5854f', 8);
  [[210,1172],[306,1190],[402,1208],[503,1226],[156,1255],[256,1275],[358,1293],[463,1315],[572,1337],[682,1359],[796,1381],[816,1284],[708,1270],[604,1248]].forEach(function (p) {
    line(p[0] + ',' + (p[1] - 13) + ' ' + p[0] + ',' + (p[1] + 13), GRAY, 10);
    line(p[0] + ',' + (p[1] - 8) + ' ' + p[0] + ',' + (p[1] + 10), GREEN, 4);
  });
  // free-standing columns at the far left
  column('170,232 188,470 210,720 222,880 235,1060 245,1140', 12);

  // left tower
  poly('225,235 268,245 320,262 450,262 500,205 530,205 530,1182 470,1186 316,1157 256,1060 236,1000 228,800 222,500', RED);
  var nx = [[240, 320], [400, 300], [550, 278], [700, 285], [900, 300], [1160, 316]];
  var i, t, y, n = 29;
  for (i = 0; i <= n; i++) {
    t = i / n;
    y = 290 + 868 * (1.2 * t - 0.2 * t * t);
    var x = at(nx, y), py = y + 8 + 20 * t, ly = y - 55 - 50 * t;
    line('224,' + (ly - 5) + ' 262,' + (y - 22 - 20 * t) + ' ' + x + ',' + y + ' 465,' + py + ' 486,' + (py - 36) + ' 530,' + (py - 32), GRAY, 11 - 6 * t);
    if (t < 0.75) { line(x + ',' + (y + 1) + ' 465,' + (py + 1), BLUE, 3, (26 - 22 * t) + ' 46'); }
    line('467,' + (py - 18) + ' 500,' + (py - 50), GRAY, 4);
  }
  column('218,210 222,480 224,740 228,1000 238,1080', 13);
  column('232,250 234,600 240,1000', 7);
  column('256,235 266,420 278,560 256,700 244,900', 12);
  column('322,240 302,400 278,560', 12);
  column('278,560 288,700 300,900 314,1150', 11);
  column('478,235 480,400', 10);
  line('244,980 320,1155', GRAY, 7);
  line('255,1085 300,1140', GRAY, 5);
  for (i = 0; i < 5; i++) { line('238,' + (266 + i * 36) + ' 238,' + (278 + i * 36), '#edf1f9', 6); }

  // right tower
  poly('532,130 572,100 640,96 720,90 800,96 945,96 930,260 915,480 898,720 880,930 862,1120 835,1230 737,1268 527,1232', RED);
  poly('915,440 925,300 905,720 880,960 860,1120 835,1230 842,950 870,740', '#9c7672');
  var cx = [[90, 718], [158, 728], [300, 748], [460, 772], [690, 796], [880, 818], [1000, 820], [1060, 800], [1170, 768], [1268, 737]];
  var dx = [[90, 948], [340, 930], [560, 912], [760, 893], [950, 872], [1120, 855], [1240, 835]];
  n = 31;
  for (i = 0; i <= n; i++) {
    t = i / n;
    y = 148 + 1084 * (1.25 * t - 0.25 * t * t);
    var yc = y + 12 + 28 * Math.min(1, 2 * t), xc = at(cx, yc), yd = yc - 16 - 24 * Math.min(1, 2 * t);
    line('522,' + (y - 4) + ' 535,' + y + ' 640,' + (y + (yc - y) * 0.5) + ' ' + xc + ',' + yc + ' ' + at(dx, yd) + ',' + yd, GRAY, 12 - 7 * t);
    if (t < 0.85) {
      line('540,' + y + ' 640,' + (y + (yc - y) * 0.5) + ' ' + xc + ',' + yc, BLUE, 3, (34 - 32 * t) + ' 46');
      line(xc + ',' + yc + ' ' + at(dx, yd) + ',' + yd, BLUE, 3, '7 18');
    }
  }
  line('944,96 934,300 922,480 905,700 886,930 866,1110', GRAY, 8, '16 8');

  // roof cores sit behind the front columns
  function core(x, y, w, h, lift) {
    poly(x + ',' + y + ' ' + (x + 22) + ',' + (y - lift) + ' ' + (x + w) + ',' + (y - lift) + ' ' + (x + w) + ',' + (y + h - 16) + ' ' + (x + w - 30) + ',' + (y + h) + ' ' + x + ',' + (y + h), VIOLET, GRAY, 4);
    poly(x + ',' + y + ' ' + (x + 22) + ',' + (y - lift) + ' ' + (x + w) + ',' + (y - lift) + ' ' + (x + w - 30) + ',' + y, GRAY);
    line((x + 8) + ',' + (y - 4) + ' ' + (x + w - 20) + ',' + (y - lift + 6), VIOLET, 3, '5 12');
    line((x + w - 30) + ',' + y + ' ' + (x + w - 30) + ',' + (y + h), GRAY, 4);
    line((x + w - 42) + ',' + (y + 4) + ' ' + (x + w - 42) + ',' + (y + h - 4), GRAY, 3);
  }
  poly('690,66 760,66 748,110 700,108', GRAY);
  core(632, 84, 84, 40, 22); core(730, 90, 88, 40, 26);
  poly('632,158 700,162 700,172 636,168', VIOLET); poly('736,160 800,150 792,172 738,168', VIOLET);
  poly('740,204 790,202 784,216 742,214', VIOLET); poly('745,248 790,244 784,256', VIOLET);
  poly('290,192 345,184 440,190 400,222 330,222', GRAY);
  core(268, 216, 82, 34, 22); core(354, 224, 98, 28, 32);
  poly('268,272 296,276 296,290 272,286', VIOLET);

  column('533,100 533,600 531,1228', 13);
  column('652,108 646,400 638,720 625,1240', 12);
  column('720,60 735,230 772,480 796,700 820,900', 12);
  column('820,900 822,980 800,1070 770,1170 737,1262', 9);
  column('922,90 905,330 885,560 866,760 846,950 834,1228', 13);
  column('940,68 932,200 915,330', 10);

  // top frames
  line('527,102 615,52 735,58 952,66 946,100 840,104 735,106 527,102', GRAY, 8);
  line('560,106 560,130', GREEN, 6); line('596,64 596,104', GREEN, 8); line('618,52 618,90', GREEN, 8);
  line('824,60 824,96', GREEN, 8); line('884,66 918,67', BLUE, 5); line('560,106 720,112', BLUE, 3, '24 30');
  line('218,212 282,182 450,188 525,194', GRAY, 8); line('462,191 510,193', BLUE, 4);
  line('288,184 288,206', GREEN, 7); line('500,215 500,240', GREEN, 6);
  line('326,252 450,262 500,212 530,206', GRAY, 8);
  document.getElementById('model').innerHTML = out.join('');
})();
</script>
</body>
</html>
